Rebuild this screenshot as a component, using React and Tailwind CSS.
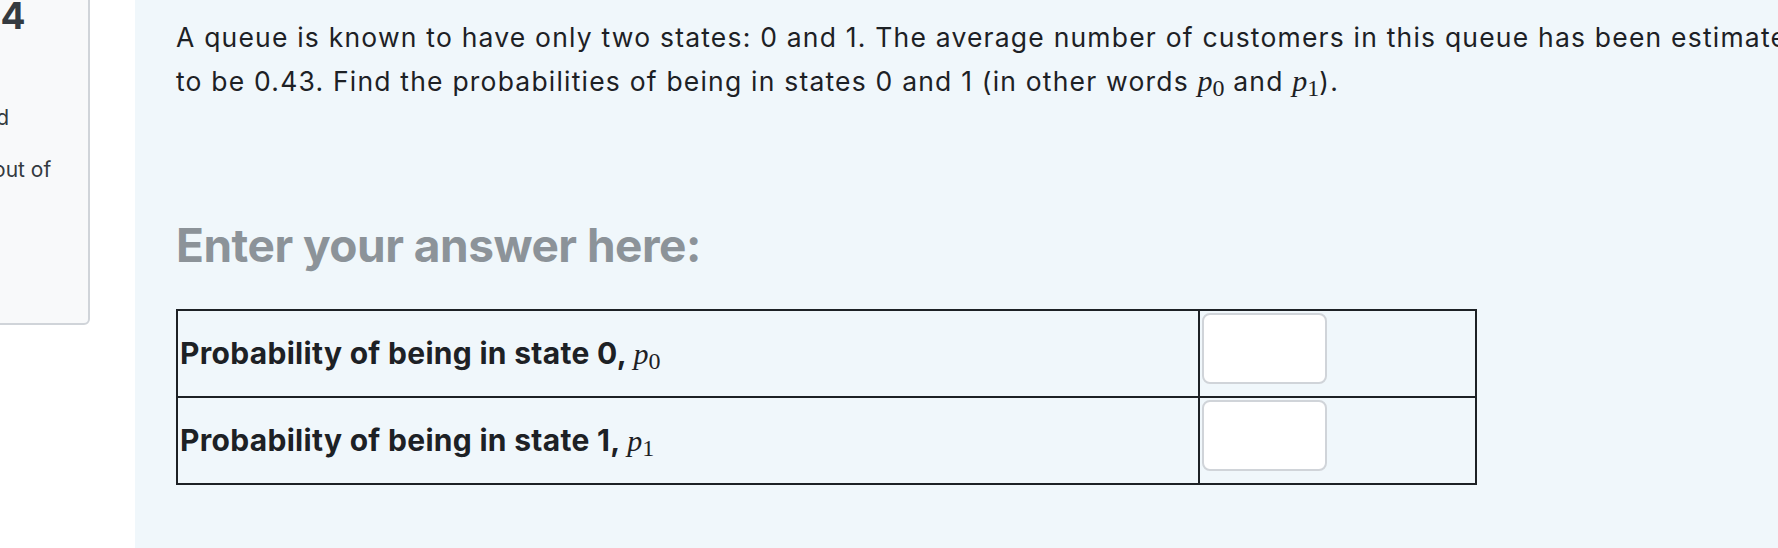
import React from "react";

const Sym = ({ name, sub }) => (
  <span className="whitespace-nowrap font-normal tracking-normal" style={{ fontFamily: "'Liberation Serif', serif" }}>
    <span className="italic text-[30px]">{name}</span>
    <span className="relative top-[5px] text-[24px]">{sub}</span>
  </span>
);

const rows = [
  { label: "Probability of being in state 0,", sub: "0" },
  { label: "Probability of being in state 1,", sub: "1" },
];

export default function App() {
  return (
    <div
      className="flex h-[548px] w-full overflow-hidden bg-white text-[#1d2125]"
      style={{ fontFamily: "Inter, 'Liberation Sans', sans-serif" }}
    >
      {/* question info box, scrolled partly out of view */}
      <div className="w-[135px] shrink-0">
        <div className="-ml-[150px] -mt-[10px] h-[335px] w-[240px] rounded-md border-2 border-[#d0d4d9] bg-[#f8f9fa] pl-[60px] text-[#343a40]">
          <h3 className="flex items-baseline gap-[4px] leading-[47px]">
            <span className="text-[20px]">Question</span>
            <span className="text-[37px] font-bold">4</span>
          </h3>
          <div className="mt-[27px] text-[21px] leading-[30px]">
            Not yet
            <br />
            answered
          </div>
          <div className="mt-[22px] text-[21px] leading-[30px]">
            Marked out of
            <br />
            1.00
          </div>
        </div>
      </div>

      {/* formulation */}
      <div className="min-w-0 flex-1 bg-[#f0f7fb] pl-[41px] pt-[16px]">
        <p className="whitespace-nowrap text-[26.5px] leading-[43px] tracking-[1.2px]">
          A queue is known to have only two states: 0 and 1. The average number of customers in this queue has been estimated
          <br />
          to be 0.43. Find the probabilities of being in states 0 and 1 (in other words <Sym name="p" sub="0" /> and{" "}
          <Sym name="p" sub="1" />
          ).
        </p>

        <h4 className="mt-[113px] text-[46px] font-bold leading-[55px] tracking-[-0.5px] text-[#8c9399]">
          Enter your answer here:
        </h4>

        <table className="mt-[36px] w-[1301px] border-collapse">
          <tbody>
            {rows.map((r) => (
              <tr key={r.sub} className="h-[87px]">
                <td className="w-[1022px] border-2 border-[#1d2125] px-[2px] align-middle text-[30px] font-bold tracking-[0.3px]">
                  {r.label} <Sym name="p" sub={r.sub} />
                </td>
                <td className="border-2 border-[#1d2125] p-[2px] align-top">
                  <input
                    type="text"
                    className="block h-[71px] w-[125px] rounded-lg border-2 border-[#d0d4d9] bg-white"
                  />
                </td>
              </tr>
            ))}
          </tbody>
        </table>
      </div>
    </div>
  );
}
